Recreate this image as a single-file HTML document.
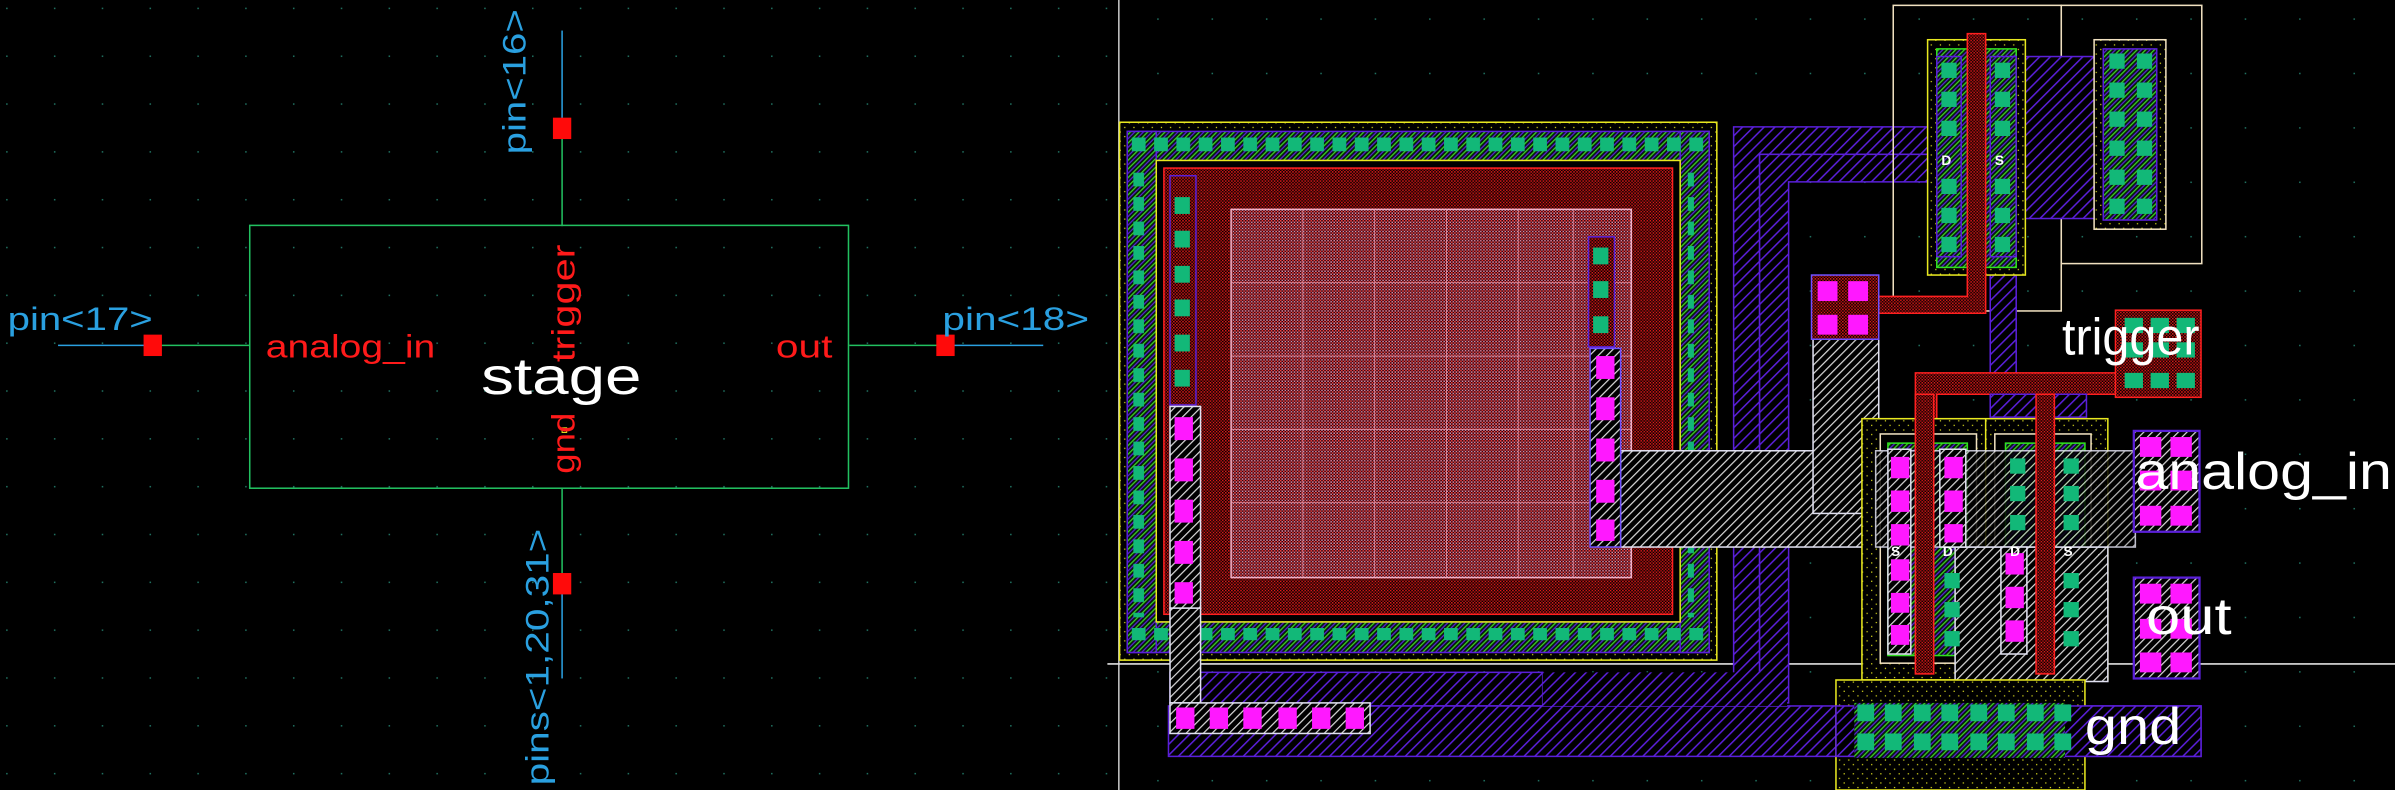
<!DOCTYPE html>
<html><head><meta charset="utf-8"><style>
html,body{margin:0;padding:0;background:#000;overflow:hidden}
svg{display:block}
text{font-family:"Liberation Sans",sans-serif}
</style></head><body>
<svg width="2395" height="790" viewBox="0 0 1568 517" preserveAspectRatio="none" xmlns="http://www.w3.org/2000/svg">
<defs>
<pattern id="dotsL" width="31.3" height="31.3" patternUnits="userSpaceOnUse" x="4" y="5"><rect width="1" height="1" fill="#1f6f5f"/></pattern>
<pattern id="dotsR" width="35.6" height="35.6" patternUnits="userSpaceOnUse" x="10" y="12"><rect width="1" height="1" fill="#1f6f5f"/></pattern>
<pattern id="hp" width="5" height="5" patternUnits="userSpaceOnUse" patternTransform="rotate(45)"><rect width="5" height="5" fill="#000"/><rect width="1" height="5" fill="#5a1fd8"/></pattern>
<pattern id="hw" width="4" height="4" patternUnits="userSpaceOnUse" patternTransform="rotate(45)"><rect width="4" height="4" fill="#000"/><rect width="0.8" height="4" fill="#d8d8d8"/></pattern>
<pattern id="hr" width="2" height="2" patternUnits="userSpaceOnUse"><rect width="2" height="2" fill="#000"/><rect width="1" height="1" fill="#e01818"/><rect x="1" y="1" width="1" height="1" fill="#b01010"/></pattern>
<pattern id="hpink" width="2" height="2" patternUnits="userSpaceOnUse"><rect width="2" height="2" fill="#2a0008"/><rect width="1" height="1" fill="#f04040"/><rect x="1" y="1" width="1" height="1" fill="#e08aa8"/></pattern>
<pattern id="hg" width="4" height="4" patternUnits="userSpaceOnUse" patternTransform="rotate(45)"><rect width="4" height="4" fill="#071a10"/><rect width="0.8" height="4" fill="#3cd820"/><rect x="2" width="0.8" height="4" fill="#5a1fd8"/></pattern>
<pattern id="yd" width="6" height="6" patternUnits="userSpaceOnUse"><rect width="6" height="6" fill="#000"/><rect x="1" y="2" width="0.8" height="0.8" fill="#e0e020"/><rect x="4" y="5" width="0.8" height="0.8" fill="#e0e020"/></pattern>
<pattern id="gcH" width="14.6" height="20" patternUnits="userSpaceOnUse" x="740" y="89"><rect x="1" y="0" width="9" height="10" fill="#12b878"/></pattern>
<pattern id="gcV" width="20" height="16" patternUnits="userSpaceOnUse" x="740" y="112"><rect x="0" y="1" width="9" height="9" fill="#12b878"/></pattern>
</defs>
<rect width="1568" height="517" fill="#000"/>
<rect x="0" y="0" width="730" height="517" fill="url(#dotsL)"/>
<rect x="734" y="0" width="834" height="517" fill="url(#dotsR)"/>

<!-- ===== schematic ===== -->
<g stroke-width="1" fill="none">
<line x1="368" y1="20" x2="368" y2="82" stroke="#2aa0e0"/>
<line x1="368" y1="82" x2="368" y2="148" stroke="#22c060"/>
<rect x="163.5" y="147.5" width="392" height="172" stroke="#22c060"/>
<line x1="38" y1="226" x2="100" y2="226" stroke="#2aa0e0"/>
<line x1="100" y1="226" x2="163" y2="226" stroke="#22c060"/>
<line x1="556" y1="226" x2="619" y2="226" stroke="#22c060"/>
<line x1="619" y1="226" x2="683" y2="226" stroke="#2aa0e0"/>
<line x1="368" y1="320" x2="368" y2="382" stroke="#22c060"/>
<line x1="368" y1="382" x2="368" y2="444" stroke="#2aa0e0"/>
</g>
<rect x="362" y="77" width="12" height="14" fill="#ff0a0a"/>
<rect x="94" y="219" width="12" height="14" fill="#ff0a0a"/>
<rect x="613" y="219" width="12" height="14" fill="#ff0a0a"/>
<rect x="362" y="375" width="12" height="14" fill="#ff0a0a"/>
<rect x="368" y="280" width="3" height="3" fill="none" stroke="#e0e020" stroke-width="0.7"/>
<g fill="#2aa0e0" font-size="21">
<text x="5" y="216" textLength="95" lengthAdjust="spacingAndGlyphs">pin&lt;17&gt;</text>
<text x="617" y="216" textLength="96" lengthAdjust="spacingAndGlyphs">pin&lt;18&gt;</text>
<text transform="translate(344,101) rotate(-90)" textLength="95" lengthAdjust="spacingAndGlyphs">pin&lt;16&gt;</text>
<text transform="translate(359,514) rotate(-90)" textLength="168" lengthAdjust="spacingAndGlyphs">pins&lt;1,20,31&gt;</text>
</g>
<g fill="#ff1a1a" font-size="21">
<text x="174" y="234" textLength="111" lengthAdjust="spacingAndGlyphs">analog_in</text>
<text x="508" y="234" textLength="37" lengthAdjust="spacingAndGlyphs">out</text>
<text transform="translate(376,237) rotate(-90)" textLength="77" lengthAdjust="spacingAndGlyphs">trigger</text>
<text transform="translate(376,310) rotate(-90)" textLength="40" lengthAdjust="spacingAndGlyphs">gnd</text>
</g>
<text x="315" y="258" fill="#fff" font-size="34" textLength="105" lengthAdjust="spacingAndGlyphs">stage</text>

<!-- dividers -->
<line x1="732.5" y1="0" x2="732.5" y2="517" stroke="#c8c8c8" stroke-width="1"/>
<line x1="725" y1="434.5" x2="1568" y2="434.5" stroke="#e0e0e0" stroke-width="1"/>

<!-- ===== layout ===== -->
<path d="M1135,83 H1265 V101 H1152 V460 H1135 Z" fill="url(#hp)" stroke="#5a1fd8"/>
<path d="M1152,101 H1265 V119 H1171 V460 H1152 Z" fill="url(#hp)" stroke="#5a1fd8"/>
<rect x="766" y="440" width="244" height="22" fill="url(#hp)" stroke="#5a1fd8"/>
<rect x="765" y="462" width="676" height="33" fill="url(#hp)" stroke="#5a1fd8"/>
<rect x="1010" y="440" width="160" height="22" fill="url(#hp)"/>

<rect x="733" y="80" width="391" height="352" fill="url(#yd)" stroke="#e8e820"/>
<rect x="738" y="86" width="381" height="20" fill="url(#hg)" stroke="#5a1fd8"/>
<rect x="738" y="407" width="381" height="20" fill="url(#hg)" stroke="#5a1fd8"/>
<rect x="738" y="86" width="19" height="341" fill="url(#hg)" stroke="#5a1fd8"/>
<rect x="1100" y="86" width="19" height="341" fill="url(#hg)" stroke="#5a1fd8"/>
<rect x="740" y="90" width="377" height="12" fill="url(#gcH)"/>
<rect x="740" y="411" width="377" height="12" fill="url(#gcH)"/>
<rect x="742" y="112" width="12" height="292" fill="url(#gcV)"/>
<rect x="1105" y="112" width="12" height="292" fill="url(#gcV)"/>
<rect x="757" y="105" width="343" height="302" fill="#000" stroke="#e8e820"/>
<rect x="762" y="110" width="333" height="292" fill="url(#hr)" stroke="#ff2020"/>
<rect x="806" y="137" width="262" height="241" fill="url(#hpink)" stroke="#f0b0c8"/>
<g stroke="#f0a0b8" stroke-width="0.6" opacity="0.8">
<line x1="853" y1="137" x2="853" y2="378"/><line x1="900" y1="137" x2="900" y2="378"/>
<line x1="947" y1="137" x2="947" y2="378"/><line x1="994" y1="137" x2="994" y2="378"/>
<line x1="1030" y1="137" x2="1030" y2="378"/>
<line x1="806" y1="185" x2="1068" y2="185"/><line x1="806" y1="233" x2="1068" y2="233"/>
<line x1="806" y1="281" x2="1068" y2="281"/><line x1="806" y1="329" x2="1068" y2="329"/>
</g>
<rect x="766" y="115" width="17" height="150" fill="url(#hr)" stroke="#5a1fd8"/>
<g fill="#12b878"><rect x="769" y="129" width="10" height="11"/><rect x="769" y="151" width="10" height="11"/><rect x="769" y="174" width="10" height="11"/><rect x="769" y="196" width="10" height="11"/><rect x="769" y="219" width="10" height="11"/><rect x="769" y="242" width="10" height="11"/></g>
<rect x="766" y="266" width="20" height="132" fill="url(#hw)" stroke="#e0e0f0"/>
<g fill="#ff18ff"><rect x="769" y="273" width="12" height="15"/><rect x="769" y="300" width="12" height="15"/><rect x="769" y="327" width="12" height="15"/><rect x="769" y="354" width="12" height="15"/><rect x="769" y="381" width="12" height="14"/></g>
<rect x="766" y="398" width="20" height="62" fill="url(#hw)" stroke="#e0e0f0"/>
<rect x="1040" y="155" width="17" height="72" fill="url(#hr)" stroke="#5a1fd8"/>
<g fill="#12b878"><rect x="1043" y="162" width="10" height="11"/><rect x="1043" y="184" width="10" height="11"/><rect x="1043" y="207" width="10" height="11"/></g>
<rect x="1061" y="295" width="167" height="63" fill="url(#hw)" stroke="#e0e0f0"/>
<rect x="1041" y="228" width="20" height="130" fill="url(#hw)" stroke="#7050ff"/>
<g fill="#ff18ff"><rect x="1045" y="233" width="12" height="15"/><rect x="1045" y="260" width="12" height="15"/><rect x="1045" y="287" width="12" height="15"/><rect x="1045" y="314" width="12" height="15"/><rect x="1045" y="340" width="12" height="14"/></g>
<rect x="766" y="460" width="131" height="20" fill="url(#hw)" stroke="#e0e0f0"/>
<g fill="#ff18ff"><rect x="770" y="463" width="12" height="14"/><rect x="792" y="463" width="12" height="14"/><rect x="814" y="463" width="12" height="14"/><rect x="837" y="463" width="12" height="14"/><rect x="859" y="463" width="12" height="14"/><rect x="881" y="463" width="12" height="14"/></g>

<rect x="1239.5" y="3.5" width="110" height="200" fill="none" stroke="#f0e0c0"/>
<rect x="1349.5" y="3.5" width="92" height="169" fill="none" stroke="#f0e0c0"/>
<rect x="1320" y="37" width="57" height="106" fill="url(#hp)" stroke="#5a1fd8"/>
<rect x="1303" y="37" width="17" height="222" fill="url(#hp)" stroke="#5a1fd8"/>
<rect x="1262" y="26" width="64" height="154" fill="url(#yd)" stroke="#e8e820"/>
<rect x="1268" y="32" width="52" height="143" fill="url(#hg)" stroke="#30e020"/>
<rect x="1268" y="37" width="16" height="131" fill="none" stroke="#5a1fd8"/>
<rect x="1303" y="37" width="17" height="131" fill="none" stroke="#5a1fd8"/>
<g fill="#12b878">
<rect x="1271" y="41" width="10" height="10"/><rect x="1271" y="60" width="10" height="10"/><rect x="1271" y="79" width="10" height="10"/><rect x="1271" y="117" width="10" height="10"/><rect x="1271" y="136" width="10" height="10"/><rect x="1271" y="155" width="10" height="10"/>
<rect x="1306" y="41" width="10" height="10"/><rect x="1306" y="60" width="10" height="10"/><rect x="1306" y="79" width="10" height="10"/><rect x="1306" y="117" width="10" height="10"/><rect x="1306" y="136" width="10" height="10"/><rect x="1306" y="155" width="10" height="10"/>
</g>
<text x="1271" y="108" fill="#fff" font-size="9" font-weight="bold">D</text>
<text x="1306" y="108" fill="#fff" font-size="9" font-weight="bold">S</text>
<path d="M1288,22 H1300 V205 H1225 V194 H1288 Z" fill="url(#hr)" stroke="#ff2020"/>
<rect x="1371" y="26" width="47" height="124" fill="url(#yd)" stroke="#f0e0c0"/>
<rect x="1377" y="32" width="35" height="112" fill="url(#hg)" stroke="#5a1fd8"/>
<g fill="#12b878">
<rect x="1381" y="35" width="10" height="10"/><rect x="1381" y="54" width="10" height="10"/><rect x="1381" y="73" width="10" height="10"/><rect x="1381" y="92" width="10" height="10"/><rect x="1381" y="111" width="10" height="10"/><rect x="1381" y="130" width="10" height="10"/>
<rect x="1399" y="35" width="10" height="10"/><rect x="1399" y="54" width="10" height="10"/><rect x="1399" y="73" width="10" height="10"/><rect x="1399" y="92" width="10" height="10"/><rect x="1399" y="111" width="10" height="10"/><rect x="1399" y="130" width="10" height="10"/>
</g>

<rect x="1187" y="222" width="43" height="114" fill="url(#hw)" stroke="#e0e0f0"/>
<rect x="1186" y="180" width="44" height="42" fill="url(#hr)" stroke="#7050ff"/>
<g fill="#ff18ff"><rect x="1190" y="184" width="13" height="13"/><rect x="1210" y="184" width="13" height="13"/><rect x="1190" y="206" width="13" height="13"/><rect x="1210" y="206" width="13" height="13"/></g>

<path d="M1254,244 H1390 V258 H1268 V440 H1254 Z" fill="url(#hr)" stroke="#ff2020"/>
<rect x="1385" y="203" width="56" height="57" fill="url(#hr)" stroke="#ff2020"/>
<g fill="#12b878"><rect x="1391" y="208" width="12" height="10"/><rect x="1408" y="208" width="12" height="10"/><rect x="1425" y="208" width="12" height="10"/><rect x="1391" y="224" width="12" height="10"/><rect x="1408" y="224" width="12" height="10"/><rect x="1425" y="224" width="12" height="10"/><rect x="1391" y="244" width="12" height="10"/><rect x="1408" y="244" width="12" height="10"/><rect x="1425" y="244" width="12" height="10"/></g>
<path d="M1303,258 V273 H1366 V258 Z" fill="url(#hp)" stroke="#5a1fd8"/>

<rect x="1219" y="274" width="161" height="171" fill="url(#yd)" stroke="#e8e820"/>
<line x1="1300" y1="274" x2="1300" y2="445" stroke="#e8e820"/>
<rect x="1231" y="284" width="63" height="150" fill="#000" stroke="#f0e0c0"/>
<rect x="1306" y="284" width="63" height="150" fill="#000" stroke="#f0e0c0"/>
<rect x="1236" y="290" width="52" height="139" fill="url(#hg)" stroke="#30e020"/>
<rect x="1313" y="290" width="52" height="139" fill="url(#hg)" stroke="#30e020"/>
<rect x="1280" y="358" width="100" height="88" fill="url(#hw)" stroke="#e0e0f0"/>
<rect x="1228" y="295" width="170" height="63" fill="url(#hw)" stroke="#e0e0f0" opacity="0.85"/>
<rect x="1236" y="294" width="15" height="134" fill="url(#hw)" stroke="#e0e0f0"/>
<rect x="1270" y="294" width="17" height="64" fill="url(#hw)" stroke="#e0e0f0"/>
<rect x="1310" y="358" width="17" height="70" fill="url(#hw)" stroke="#e0e0f0"/>
<g fill="#ff18ff">
<rect x="1238" y="299" width="12" height="14"/><rect x="1238" y="321" width="12" height="14"/><rect x="1238" y="343" width="12" height="14"/><rect x="1238" y="366" width="12" height="14"/><rect x="1238" y="388" width="12" height="13"/><rect x="1238" y="409" width="12" height="13"/>
<rect x="1273" y="299" width="12" height="14"/><rect x="1273" y="321" width="12" height="14"/><rect x="1273" y="343" width="12" height="12"/>
<rect x="1313" y="362" width="12" height="14"/><rect x="1313" y="384" width="12" height="14"/><rect x="1313" y="406" width="12" height="14"/>
</g>
<g fill="#12b878">
<rect x="1273" y="375" width="10" height="10"/><rect x="1273" y="394" width="10" height="10"/><rect x="1273" y="413" width="10" height="10"/>
<rect x="1316" y="300" width="10" height="10"/><rect x="1316" y="318" width="10" height="10"/><rect x="1316" y="337" width="10" height="10"/>
<rect x="1351" y="300" width="10" height="10"/><rect x="1351" y="318" width="10" height="10"/><rect x="1351" y="337" width="10" height="10"/><rect x="1351" y="375" width="10" height="10"/><rect x="1351" y="394" width="10" height="10"/><rect x="1351" y="413" width="10" height="10"/>
</g>
<text x="1238" y="364" fill="#fff" font-size="9" font-weight="bold">S</text>
<text x="1272" y="364" fill="#fff" font-size="9" font-weight="bold">D</text>
<text x="1316" y="364" fill="#fff" font-size="9" font-weight="bold">D</text>
<text x="1351" y="364" fill="#fff" font-size="9" font-weight="bold">S</text>
<rect x="1254" y="258" width="12" height="183" fill="url(#hr)" stroke="#ff2020"/>
<rect x="1333" y="258" width="12" height="183" fill="url(#hr)" stroke="#ff2020"/>

<rect x="1202" y="445" width="163" height="72" fill="url(#yd)" stroke="#e8e820"/>
<rect x="1202" y="462" width="239" height="33" fill="url(#hp)" stroke="#5a1fd8"/>
<rect x="1214" y="460" width="138" height="36" fill="url(#hg)"/>
<g fill="#12b878">
<rect x="1216" y="461" width="11" height="11"/><rect x="1234" y="461" width="11" height="11"/><rect x="1253" y="461" width="11" height="11"/><rect x="1271" y="461" width="11" height="11"/><rect x="1290" y="461" width="11" height="11"/><rect x="1308" y="461" width="11" height="11"/><rect x="1327" y="461" width="11" height="11"/><rect x="1345" y="461" width="11" height="11"/>
<rect x="1216" y="480" width="11" height="11"/><rect x="1234" y="480" width="11" height="11"/><rect x="1253" y="480" width="11" height="11"/><rect x="1271" y="480" width="11" height="11"/><rect x="1290" y="480" width="11" height="11"/><rect x="1308" y="480" width="11" height="11"/><rect x="1327" y="480" width="11" height="11"/><rect x="1345" y="480" width="11" height="11"/>
</g>

<rect x="1397" y="282" width="43" height="66" fill="url(#hw)" stroke="#5a1fd8" stroke-width="1.5"/>
<g fill="#ff18ff"><rect x="1401" y="286" width="14" height="13"/><rect x="1421" y="286" width="14" height="13"/><rect x="1401" y="308" width="14" height="13"/><rect x="1421" y="308" width="14" height="13"/><rect x="1401" y="331" width="14" height="13"/><rect x="1421" y="331" width="14" height="13"/></g>
<rect x="1397" y="378" width="43" height="66" fill="url(#hw)" stroke="#5a1fd8" stroke-width="1.5"/>
<g fill="#ff18ff"><rect x="1401" y="382" width="14" height="13"/><rect x="1421" y="382" width="14" height="13"/><rect x="1401" y="405" width="14" height="13"/><rect x="1421" y="405" width="14" height="13"/><rect x="1401" y="427" width="14" height="13"/><rect x="1421" y="427" width="14" height="13"/></g>

<g fill="#fff" font-size="34">
<text x="1350" y="232" textLength="90" lengthAdjust="spacingAndGlyphs">trigger</text>
<text x="1398" y="320" textLength="168" lengthAdjust="spacingAndGlyphs">analog_in</text>
<text x="1405" y="415" textLength="56" lengthAdjust="spacingAndGlyphs">out</text>
<text x="1365" y="487" textLength="63" lengthAdjust="spacingAndGlyphs">gnd</text>
</g>
</svg>
</body></html>
